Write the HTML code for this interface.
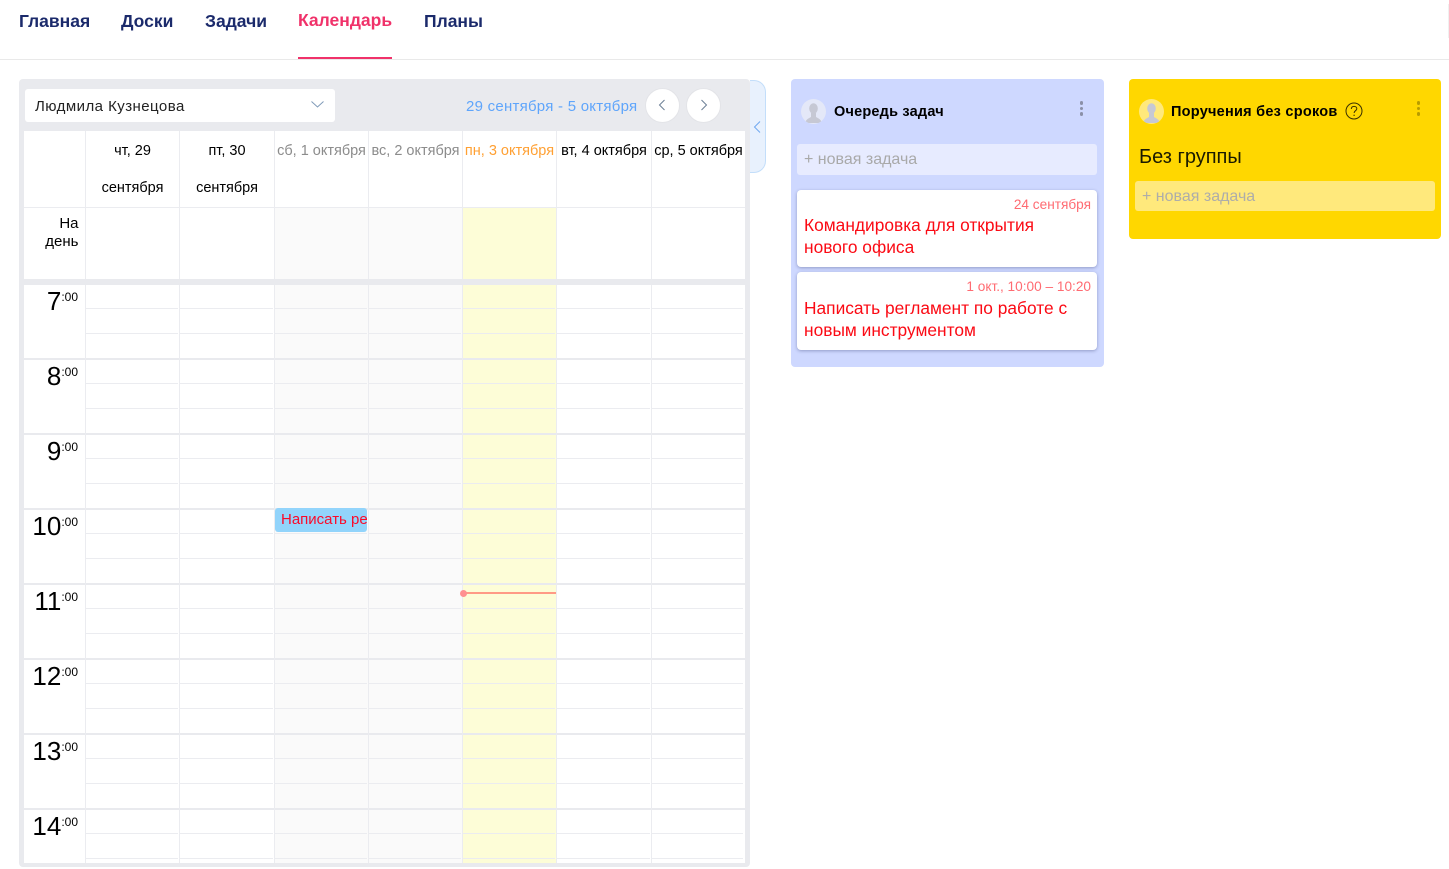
<!DOCTYPE html>
<html lang="ru"><head><meta charset="utf-8"><title>Календарь</title>
<style>
*{box-sizing:border-box}
html,body{margin:0;padding:0;width:1449px;height:869px;overflow:hidden;background:#fff;font-family:"Liberation Sans",sans-serif;color:#000}
.a{position:absolute}
.t{position:absolute;white-space:nowrap}
.nav{top:10px;font-size:17.5px;line-height:22px;font-weight:700;color:#1b2a6b}
.col{position:absolute;top:285px;height:578px;background-image:linear-gradient(to bottom,transparent 23px,#ebecf0 23px,#ebecf0 24px,transparent 24px,transparent 48px,#ebecf0 48px,#ebecf0 49px,transparent 49px);background-size:calc(100% - 2px) 75px;background-repeat:repeat-y;background-position:0 0}
.b{position:absolute;width:1px;top:131px;height:732px;background:#ebecf0}
.h{position:absolute;left:24px;width:721px;height:2px;background:#e9eaee}
.d{position:absolute;top:133px;height:74px;font-size:14.5px;line-height:37px;text-align:center;white-space:nowrap}
.d span{display:block}
.lab{position:absolute;left:24px;width:54px;text-align:right;white-space:nowrap;font-size:26px;line-height:30px;height:30px}
.lab sup{font-size:12px;line-height:12px;position:relative;top:-9px;vertical-align:baseline}
.card{position:absolute;left:797px;width:300px;background:#fff;border-radius:4px;box-shadow:0 1px 3px rgba(70,80,130,.45)}
.dots i{position:absolute;left:0;width:3.500px;height:3.500px;border-radius:50%;background:currentColor}
.ttl{position:absolute;white-space:nowrap;font-size:17.350px;line-height:22px;color:#fb0a14}
.dt{position:absolute;white-space:nowrap;right:358px;font-size:13.650px;line-height:17px;color:#ff6b72}
.inp{position:absolute;white-space:nowrap;font-size:16px;line-height:20px;color:#a9a9a9}
</style></head><body>
<div class="t nav" style="left:19px">Главная</div>
<div class="t nav" style="left:121px">Доски</div>
<div class="t nav" style="left:205px">Задачи</div>
<div class="t nav" style="left:298px;top:9px;color:#f0326a">Календарь</div>
<div class="t nav" style="left:424px">Планы</div>
<div class="a" style="left:0;top:59px;width:1449px;height:1px;background:#e9e9e9"></div>
<div class="a" style="left:298px;top:57px;width:94px;height:2px;background:#f0326a"></div>
<div class="a" style="left:1448px;top:4px;width:1px;height:34px;background:#f0f0f0"></div>

<div class="a" style="left:750px;top:80px;width:16px;height:93px;background:#e8f1fd;border:1px solid #c3defa;border-left:0;border-radius:0 12px 12px 0"></div>
<svg class="a" style="left:752px;top:120px" width="10" height="14" viewBox="0 0 10 14"><path d="M8 1.500L2.500 7L8 12.500" fill="none" stroke="#6fa8f0" stroke-width="1"/></svg>

<div class="a" style="left:19px;top:79px;width:731px;height:788px;background:#e9eaee;border-radius:4px"></div>
<div class="a" style="left:25px;top:89px;width:310px;height:33px;background:#fff;border-radius:3px"></div>
<div class="t" style="left:35px;top:97px;font-size:15px;line-height:20px;color:#222;letter-spacing:.45px">Людмила Кузнецова</div>
<svg class="a" style="left:310px;top:99px" width="15" height="10" viewBox="0 0 15 10"><path d="M1.500 2.500L7.500 8L13.500 2.500" fill="none" stroke="#7f9ab8" stroke-width="1"/></svg>
<div class="t" style="left:466px;top:97px;font-size:15px;line-height:20px;color:#5fa5fb;letter-spacing:.25px">29 сентября - 5 октября</div>
<div class="a" style="left:645px;top:88px;width:35px;height:35px;border-radius:50%;background:#fff;border:1px solid #e3e4e8"></div>
<div class="a" style="left:686px;top:88px;width:35px;height:35px;border-radius:50%;background:#fff;border:1px solid #e3e4e8"></div>
<svg class="a" style="left:657px;top:99px" width="10" height="12" viewBox="0 0 10 12"><path d="M7.500 1L2.500 6L7.500 11" fill="none" stroke="#6b7f95" stroke-width="1"/></svg>
<svg class="a" style="left:699px;top:99px" width="10" height="12" viewBox="0 0 10 12"><path d="M2.500 1L7.500 6L2.500 11" fill="none" stroke="#6b7f95" stroke-width="1"/></svg>

<div class="a" style="left:24px;top:131px;width:721px;height:148px;background:#fff"></div>
<div class="a" style="left:24px;top:285px;width:721px;height:578px;background:#fff"></div>
<div class="a" style="left:275px;top:208px;width:187px;height:71px;background:#fafafa"></div>
<div class="a" style="left:463px;top:208px;width:93px;height:71px;background:#fdfdd7"></div>
<div class="col" style="left:86px;width:94px"></div>
<div class="col" style="left:180px;width:95px"></div>
<div class="col" style="left:275px;width:94px;background-color:#fafafa"></div>
<div class="col" style="left:369px;width:94px;background-color:#fafafa"></div>
<div class="col" style="left:463px;width:94px;background-color:#fdfdd7"></div>
<div class="col" style="left:557px;width:95px"></div>
<div class="col" style="left:652px;width:93px"></div>
<div class="a" style="left:24px;top:207px;width:721px;height:1px;background:#ebecf0"></div>
<div class="h" style="top:358px"></div><div class="h" style="top:433px"></div><div class="h" style="top:508px"></div><div class="h" style="top:583px"></div><div class="h" style="top:658px"></div><div class="h" style="top:733px"></div><div class="h" style="top:808px"></div>
<div class="b" style="left:85px"></div><div class="b" style="left:179px"></div><div class="b" style="left:274px"></div><div class="b" style="left:368px"></div><div class="b" style="left:462px"></div><div class="b" style="left:556px"></div><div class="b" style="left:651px"></div>
<div class="a" style="left:24px;top:279px;width:721px;height:6px;background:#e9eaee"></div>

<div class="d" style="left:86px;width:93px"><span>чт, 29</span><span>сентября</span></div>
<div class="d" style="left:180px;width:94px"><span>пт, 30</span><span>сентября</span></div>
<div class="d" style="left:275px;width:93px;color:#8c8c8c">сб, 1 октября</div>
<div class="d" style="left:369px;width:93px;color:#8c8c8c">вс, 2 октября</div>
<div class="d" style="left:463px;width:93px;color:#ffa033">пн, 3 октября</div>
<div class="d" style="left:557px;width:94px">вт, 4 октября</div>
<div class="d" style="left:652px;width:93px">ср, 5 октября</div>

<div class="a" style="left:24px;top:215px;width:54.500px;text-align:right;font-size:15px;line-height:18px">На<br>день</div>

<div class="lab" style="top:286px">7<sup>:00</sup></div>
<div class="lab" style="top:361px">8<sup>:00</sup></div>
<div class="lab" style="top:436px">9<sup>:00</sup></div>
<div class="lab" style="top:511px">10<sup>:00</sup></div>
<div class="lab" style="top:586px">11<sup>:00</sup></div>
<div class="lab" style="top:661px">12<sup>:00</sup></div>
<div class="lab" style="top:736px">13<sup>:00</sup></div>
<div class="lab" style="top:811px">14<sup>:00</sup></div>

<div class="a" style="left:275px;top:508px;width:92px;height:24px;background:#92d4fb;border-radius:3px;overflow:hidden;white-space:nowrap;color:#fb0a2a;font-size:15px;line-height:24px;padding-left:6px">Написать регламент</div>
<div class="a" style="left:463px;top:592px;width:93px;height:2px;background:#ff9a85"></div>
<div class="a" style="left:460px;top:590px;width:7px;height:7px;border-radius:50%;background:#ff9090"></div>

<!-- blue panel -->
<div class="a" style="left:791px;top:79px;width:313px;height:288px;background:#ced8ff;border-radius:4px"></div>
<svg class="a" style="left:801px;top:99px" width="25" height="25" viewBox="0 0 25 25"><defs><clipPath id="c1"><circle cx="12.500" cy="12.500" r="12.500"/></clipPath></defs><circle cx="12.500" cy="12.500" r="12.500" fill="#e4e8f8"/><g clip-path="url(#c1)" fill="#c6c8d4"><ellipse cx="12.500" cy="9.500" rx="4.300" ry="5.300"/><path d="M4.500 24c0-3.500 3-4.500 5.500-6v-4h5v4c2.500 1.500 5.500 2.500 5.500 6z"/></g></svg>
<div class="t" style="left:834px;top:103px;font-size:14.500px;line-height:18px;font-weight:700;letter-spacing:.2px">Очередь задач</div>
<div class="a dots" style="left:1079.500px;top:100px;width:4px;height:16px;color:#8b90a8"><i style="top:1px"></i><i style="top:6.500px"></i><i style="top:12px"></i></div>
<div class="a" style="left:797px;top:144px;width:300px;height:31px;background:#e7ebff;border-radius:3px"></div>
<div class="inp" style="left:804px;top:150px">+ новая задача</div>
<div class="card" style="top:190px;height:77px"></div>
<div class="dt" style="top:196px">24 сентября</div>
<div class="ttl" style="left:804px;top:214px">Командировка для открытия<br>нового офиса</div>
<div class="card" style="top:272px;height:78px"></div>
<div class="dt" style="top:278px">1 окт., 10:00 – 10:20</div>
<div class="ttl" style="left:804px;top:297px">Написать регламент по работе с<br>новым инструментом</div>

<!-- yellow panel -->
<div class="a" style="left:1129px;top:79px;width:312px;height:160px;background:#ffd700;border-radius:4px"></div>
<svg class="a" style="left:1139px;top:99px" width="25" height="25" viewBox="0 0 25 25"><defs><clipPath id="c2"><circle cx="12.500" cy="12.500" r="12.500"/></clipPath></defs><circle cx="12.500" cy="12.500" r="12.500" fill="#ffe97c"/><g clip-path="url(#c2)" fill="#c6c8d4"><ellipse cx="12.500" cy="9.500" rx="4.300" ry="5.300"/><path d="M4.500 24c0-3.500 3-4.500 5.500-6v-4h5v4c2.500 1.500 5.500 2.500 5.500 6z"/></g></svg>
<div class="t" style="left:1171px;top:103px;font-size:14.500px;line-height:18px;font-weight:700;letter-spacing:.25px">Поручения без сроков</div>
<svg class="a" style="left:1345px;top:102px" width="18" height="18" viewBox="0 0 18 18"><circle cx="9" cy="9" r="8" fill="none" stroke="#3a3000" stroke-width="1"/><path d="M6.300 7c.1-1.700 1.300-2.600 2.800-2.600 1.600 0 2.700 1 2.700 2.300 0 2-2.700 2-2.700 4.300" fill="none" stroke="#3a3000" stroke-width="1"/><circle cx="9.100" cy="13.300" r=".7" fill="#3a3000"/></svg>
<div class="a dots" style="left:1416.500px;top:100px;width:4px;height:16px;color:#b89c00"><i style="top:1px"></i><i style="top:6.500px"></i><i style="top:12px"></i></div>
<div class="t" style="left:1139px;top:145px;font-size:20px;line-height:24px;color:#1a1a00">Без группы</div>
<div class="a" style="left:1135px;top:181px;width:300px;height:30px;background:#ffe97c;border-radius:3px"></div>
<div class="inp" style="left:1142px;top:187px;color:#aeadaa">+ новая задача</div>
</body></html>
